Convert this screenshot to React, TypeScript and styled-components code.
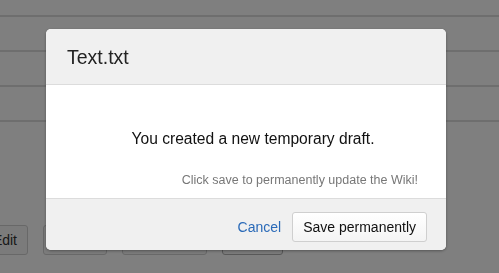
import React from 'react';
import { createGlobalStyle, styled } from 'styled-components';

const GlobalStyle = createGlobalStyle`
    html, body {
        margin: 0;
        padding: 0;
        background: #ffffff;
        font-family: "Liberation Sans", Arial, Helvetica, sans-serif;
    }
`;

const rows = [0, 1, 2, 3];
const toolButtons = [
    { label: 'Edit', width: 58, dark: false },
    { label: 'History', width: 64, dark: false },
    { label: 'Attachments', width: 85, dark: false },
    { label: 'Delete', width: 61, dark: true },
];

const App = () => {
    return (
        <>
            <GlobalStyle />
            <Page>
                <Table>
                    {rows.map((r) => (
                        <Row key={r} />
                    ))}
                </Table>
                <Toolbar>
                    {toolButtons.map((b) => (
                        <ToolButton key={b.label} $width={b.width} $dark={b.dark}>
                            {b.label}
                        </ToolButton>
                    ))}
                </Toolbar>
            </Page>
            <Backdrop />
            <Modal>
                <ModalHeader>
                    <Title>Text.txt</Title>
                </ModalHeader>
                <ModalBody>
                    <Message>You created a new temporary draft.</Message>
                    <Hint>Click save to permanently update the Wiki!</Hint>
                </ModalBody>
                <ModalFooter>
                    <CancelLink href="#">Cancel</CancelLink>
                    <SaveButton>Save permanently</SaveButton>
                </ModalFooter>
            </Modal>
        </>
    );
};

const Page = styled.div`
    width: 499px;
    height: 273px;
    overflow: hidden;
`;
const Table = styled.div`
    display: flex;
    flex-direction: column;
    padding-top: 15px;
`;
const Row = styled.div`
    height: 33px;
    border-top: 2px solid #dddddd;
`;
const Toolbar = styled.div`
    display: flex;
    gap: 15px;
    margin-top: 70px;
    margin-left: -30px;
`;
const ToolButton = styled.div<{ $width: number; $dark: boolean }>`
    box-sizing: border-box;
    width: ${(p) => p.$width}px;
    height: 30px;
    display: flex;
    align-items: center;
    justify-content: flex-end;
    padding-right: 10px;
    border: 1px solid ${(p) => (p.$dark ? '#b0b0b0' : '#d0d0d0')};
    border-radius: 3px;
    background: #f7f7f7;
    color: #333;
    font-size: 14px;
`;
const Backdrop = styled.div`
    position: fixed;
    inset: 0;
    background: rgba(0, 0, 0, 0.5);
`;
const Modal = styled.div`
    position: fixed;
    left: 46px;
    top: 29px;
    width: 400px;
    display: flex;
    flex-direction: column;
    background: #ffffff;
    border-radius: 5px;
    overflow: hidden;
    box-shadow: 0 1px 3px rgba(0, 0, 0, 0.35);
`;
const ModalHeader = styled.div`
    height: 56px;
    box-sizing: border-box;
    display: flex;
    align-items: center;
    padding: 2px 21px 0;
    background: #f0f0f0;
    border-bottom: 1px solid #dcdcdc;
`;
const Title = styled.h3`
    margin: 0;
    font-size: 19.5px;
    font-weight: normal;
    color: #222;
`;
const ModalBody = styled.div`
    height: 113px;
    box-sizing: border-box;
    display: flex;
    flex-direction: column;
    padding: 45px 28px 0 42px;
`;
const Message = styled.p`
    margin: 0;
    text-align: center;
    font-size: 15.6px;
    line-height: 18px;
    color: #111;
`;
const Hint = styled.p`
    margin: 25px 0 0;
    text-align: right;
    font-size: 12.5px;
    line-height: 15px;
    color: #777;
`;
const ModalFooter = styled.div`
    height: 52px;
    box-sizing: border-box;
    display: flex;
    align-items: flex-start;
    justify-content: flex-end;
    gap: 11px;
    padding: 13px 19px 0;
    background: #f0f0f0;
    border-top: 1px solid #dcdcdc;
`;
const CancelLink = styled.a`
    margin-top: 7px;
    font-size: 14px;
    color: #2a6ab8;
    text-decoration: none;
`;
const SaveButton = styled.button`
    height: 30px;
    padding: 0 10px;
    font-family: inherit;
    font-size: 14px;
    color: #111;
    background: linear-gradient(#ffffff, #f4f4f4);
    border: 1px solid #cfcfcf;
    border-radius: 3px;
`;

export default App;
